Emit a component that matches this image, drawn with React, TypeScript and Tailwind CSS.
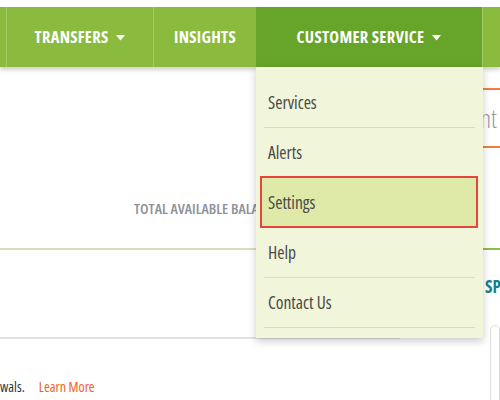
import React from "react";

const Caret = () => (
  <svg width="9" height="6" viewBox="0 0 9 6" className="mt-[1px]">
    <path d="M0 0 H9 L4.5 5.5 Z" fill="#ffffff" />
  </svg>
);

const menuItems = ["Services", "Alerts", "Settings", "Help", "Contact Us"];

export default function App() {
  return (
    <div
      className="relative w-[500px] h-[400px] overflow-hidden bg-white font-stretch-condensed"
      style={{ fontFamily: "'Open Sans', 'Liberation Sans', sans-serif" }}
    >
      <div className="h-[7px]" />

      {/* top nav */}
      <nav className="relative z-10 flex h-[60px] bg-[#8abb3e] shadow-[0_3px_4px_rgba(0,0,0,0.18)] text-white font-bold text-[16.5px] tracking-[0.3px]">
        <div className="w-[7px] border-r border-[#a2cb68]" />
        <div className="w-[147px] flex items-center justify-center gap-2 border-r border-[#a2cb68]">
          TRANSFERS <Caret />
        </div>
        <div className="w-[102px] flex items-center justify-center">INSIGHTS</div>
        <div className="w-[227px] flex items-center justify-center gap-2 bg-[#67a42a] border-r border-[#a2cb68]">
          CUSTOMER SERVICE <Caret />
        </div>
        <div className="flex-1" />
      </nav>

      {/* page content */}
      <div className="flex">
        <div className="w-[400px] shrink-0">
          <div className="h-[181px] flex items-end pb-[30px] pl-[134px]">
            {/* balance label runs under the open dropdown */}
            <div className="w-[122px] overflow-hidden">
              <span className="block text-[15px] leading-5 font-semibold text-[#8d9199] whitespace-nowrap">
                TOTAL AVAILABLE BALANCE
              </span>
            </div>
          </div>
          <div className="h-[2px] bg-[#d8dfbd]" />
          <div className="h-[87px]" />
          <div className="h-[2px] bg-[#e3e3e3]" />
          <div
            className="mt-[38px] flex items-center gap-[14px] text-[14px] leading-5"
            style={{ fontFamily: "'Liberation Sans Narrow', 'Open Sans', sans-serif" }}
          >
            <span className="text-[#333]">wals.</span>
            <span className="text-[#f0622a]">Learn More</span>
          </div>
        </div>

        <div className="flex-1 min-w-0">
          <div className="mt-[21px] ml-[20px] h-[60px] border-2 border-r-0 border-[#f47d3e] flex items-center justify-end pr-[3px]">
            <span className="text-[26px] font-light text-[#9a9a9a] whitespace-nowrap">Enter amount</span>
          </div>
          <div className="h-[100px]" />
          <div className="h-[2px] bg-[#8cbf45]" />
          <div className="pl-[85px] mt-[27px] text-[17px] leading-5 font-bold text-[#16808f] whitespace-nowrap">
            SPENDING
          </div>
          <div className="ml-[90px] mt-[28px] h-[120px] rounded-2xl border border-[#dedede]" />
        </div>
      </div>

      {/* dropdown */}
      <div className="absolute z-20 top-[67px] left-[256px] w-[227px] pt-[11px] pb-[10px] bg-[#f1f6da] shadow-[0_3px_8px_rgba(0,0,0,0.22)] text-[17.5px] text-[#4a4a4a]">
        {menuItems.map((item) =>
          item === "Settings" ? (
            <div
              key={item}
              className="mx-1 mr-[5px] h-[52px] flex items-center px-[6px] border-2 border-[#e5453c] bg-[#dfeaa9]"
            >
              {item}
            </div>
          ) : (
            <div
              key={item}
              className={
                item === "Alerts"
                  ? "mx-2 h-[48px] flex items-center px-1"
                  : "mx-2 h-[50px] flex items-center px-1 border-b border-[#d7e1b3]"
              }
            >
              {item}
            </div>
          )
        )}
      </div>
    </div>
  );
}
